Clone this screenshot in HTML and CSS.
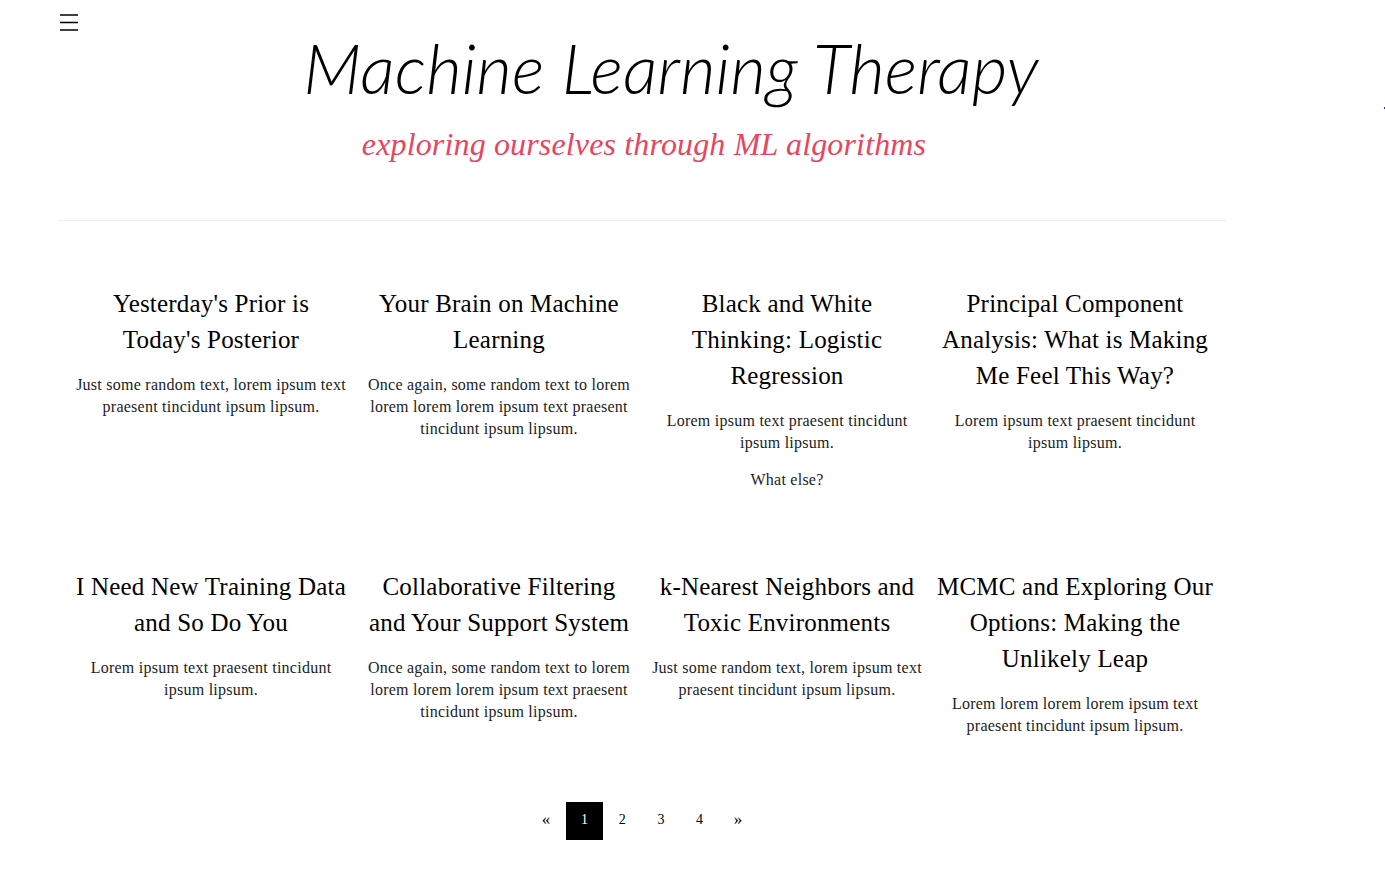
FILE: index.html
```html
<!DOCTYPE html>
<html lang="en">
<head>
    <meta charset="UTF-8">
    <meta name="viewport" content="width=device-width, initial-scale=1.0">
    <title>Machine Learning Therapy</title>
    <link rel="stylesheet" href="styles.css">
</head>
<body>
    <span class="stray-dot"></span>
    <div class="container">
        <button class="menu-btn" aria-label="Menu">
            <svg width="18" height="17" viewBox="0 0 18 17"><path d="M0 1h18M0 8.5h18M0 16h18" stroke="#000" stroke-width="1.7" fill="none"/></svg>
        </button>
        <header class="site-header">
            <h1 class="site-title">Machine Learning Therapy</h1>
            <p class="site-tagline">exploring ourselves through ML algorithms</p>
        </header>
        <hr class="divider">
        <div class="posts">
            <article class="post">
                <h3>Yesterday's Prior is Today's Posterior</h3>
                <p>Just some random text, lorem ipsum text praesent tincidunt ipsum lipsum.</p>
            </article>
            <article class="post">
                <h3>Your Brain on Machine Learning</h3>
                <p>Once again, some random text to lorem lorem lorem lorem ipsum text praesent tincidunt ipsum lipsum.</p>
            </article>
            <article class="post">
                <h3>Black and White Thinking: Logistic Regression</h3>
                <p>Lorem ipsum text praesent tincidunt ipsum lipsum.</p>
                <p>What else?</p>
            </article>
            <article class="post">
                <h3>Principal Component Analysis: What is Making Me Feel This Way?</h3>
                <p>Lorem ipsum text praesent tincidunt ipsum lipsum.</p>
            </article>
            <article class="post">
                <h3>I Need New Training Data and So Do You</h3>
                <p>Lorem ipsum text praesent tincidunt ipsum lipsum.</p>
            </article>
            <article class="post">
                <h3>Collaborative Filtering and Your Support System</h3>
                <p>Once again, some random text to lorem lorem lorem lorem ipsum text praesent tincidunt ipsum lipsum.</p>
            </article>
            <article class="post">
                <h3>k-Nearest Neighbors and Toxic Environments</h3>
                <p>Just some random text, lorem ipsum text praesent tincidunt ipsum lipsum.</p>
            </article>
            <article class="post">
                <h3>MCMC and Exploring Our Options: Making the Unlikely Leap</h3>
                <p>Lorem lorem lorem lorem ipsum text praesent tincidunt ipsum lipsum.</p>
            </article>
        </div>
        <nav class="pagination">
            <a href="#" class="arrow">«</a>
            <a href="#" class="active">1</a>
            <a href="#">2</a>
            <a href="#">3</a>
            <a href="#">4</a>
            <a href="#" class="arrow">»</a>
        </nav>
    </div>
</body>
</html>
```

FILE: styles.css
```css
body {
    font-family: "Liberation Serif", serif;
    margin: 0;
    background-color: #fff;
    color: #000;
    overflow-x: hidden;
}
.container {
    width: 1168px;
    margin-left: 59px;
    position: relative;
}
.stray-dot {
    position: absolute;
    left: 1384px;
    top: 107px;
    width: 1px;
    height: 2px;
    background: #2222ff;
}
.menu-btn {
    position: absolute;
    left: 1px;
    top: 14px;
    padding: 0;
    border: none;
    background: none;
    line-height: 0;
}
.site-header {
    height: 220px;
    overflow: hidden;
    text-align: center;
}
.site-title {
    margin: 0;
    padding: 26px 0 0 56px;
    font-family: Lato, sans-serif;
    font-style: italic;
    font-weight: 300;
    font-size: 69px;
    line-height: 84px;
    white-space: nowrap;
}
.site-tagline {
    margin: 16px 0 0;
    padding-left: 2px;
    font-style: italic;
    font-size: 32px;
    line-height: 36px;
    letter-spacing: 0.15px;
    color: #e8465f;
}
.divider {
    margin: 0;
    border: none;
    border-top: 1px solid #eee;
}
.posts {
    display: grid;
    grid-template-columns: repeat(4, 1fr);
    row-gap: 78px;
    padding: 65px 8px 0;
    align-items: start;
}
.post {
    padding: 0 8px;
    text-align: center;
}
.post h3 {
    margin: 0 -2px;
    font-weight: 400;
    font-size: 25px;
    line-height: 36px;
    letter-spacing: 0.2px;
}
.post p {
    margin: 16px 0 0;
    font-size: 16px;
    line-height: 22px;
    letter-spacing: 0.25px;
    color: #222;
}
.post p + p {
    margin-top: 15px;
}
.pagination {
    display: flex;
    justify-content: center;
    margin-top: 65px;
    padding-right: 2px;
}
.pagination a {
    width: 38.6px;
    height: 38px;
    line-height: 36px;
    text-align: center;
    font-size: 14px;
    color: #000;
    text-decoration: none;
}
.pagination a.arrow {
    font-size: 17px;
}
.pagination a.active {
    width: 37px;
    margin-left: 0.8px;
    background: #000;
    color: #fff;
}
```
